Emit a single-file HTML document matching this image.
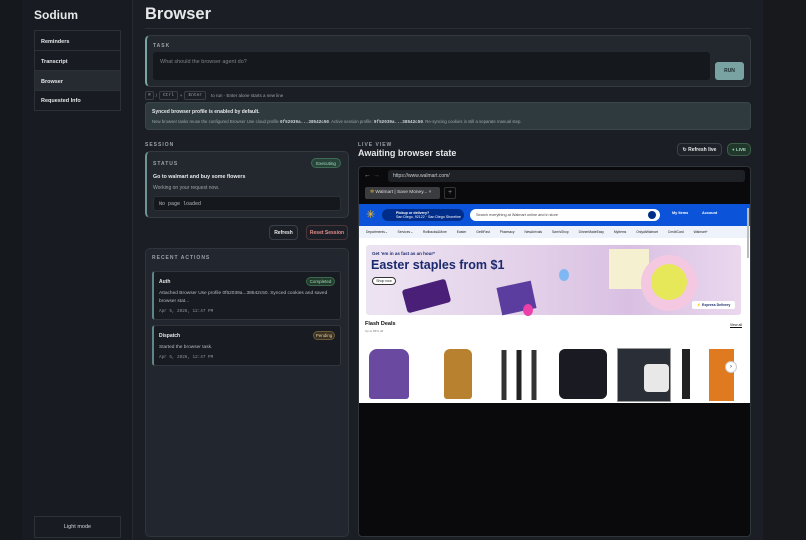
<!DOCTYPE html>
<html><head><meta charset="utf-8"><style>
*{box-sizing:border-box;margin:0;padding:0}
body{width:806px;height:540px;overflow:hidden;background:#15181c;font-family:"Liberation Sans",sans-serif;color:#e6e8ea;position:relative}
.abs{position:absolute}
.mono{font-family:"Liberation Mono",monospace}
.lbl{font-size:5px;letter-spacing:1px;color:#9aa2a8;font-weight:bold}
.btn{position:absolute;border:1px solid #3a4048;border-radius:4px;font-size:5px;font-weight:bold;display:flex;align-items:center;justify-content:center;background:#1c2026}
.pill{position:absolute;border-radius:5px;font-size:4.5px;display:flex;align-items:center;justify-content:center}
</style></head><body>
<!-- sidebar -->
<div class="abs" style="left:22px;top:0;width:111px;height:540px;background:#181b21;border-right:1px solid #262a30"></div>
<div class="abs" style="left:34px;top:8px;font-size:12px;font-weight:bold">Sodium</div>
<div class="abs" style="left:34px;top:30px;width:87px;height:81px;border:1px solid #2c3138">
<div style="height:20px;border-bottom:1px solid #2c3138;font-size:5.5px;font-weight:bold;padding:8px 0 0 6px">Reminders</div>
<div style="height:20px;border-bottom:1px solid #2c3138;font-size:5.5px;font-weight:bold;padding:8px 0 0 6px">Transcript</div>
<div style="height:20px;border-bottom:1px solid #2c3138;font-size:5.5px;font-weight:bold;padding:8px 0 0 6px;background:#262a31">Browser</div>
<div style="height:19px;font-size:5.5px;font-weight:bold;padding:7px 0 0 6px">Requested Info</div>
</div>
<div class="abs" style="left:34px;top:516px;width:87px;height:22px;border:1px solid #2c3138;font-size:5.5px;display:flex;align-items:center;justify-content:center;color:#d0d4d8">Light mode</div>
<!-- main -->
<div class="abs" style="left:133px;top:0;width:630px;height:540px;background:#1b1e24"></div>
<div class="abs" style="left:763px;top:0;width:43px;height:540px;background:#17191d"></div>
<div class="abs" style="left:145px;top:5px;font-size:16.5px;font-weight:bold">Browser</div>
<div class="abs" style="left:145px;top:28px;width:606px;height:1px;background:#2a2f35"></div>
<!-- task -->
<div class="abs" style="left:145px;top:35px;width:606px;height:52px;background:#23282f;border:1px solid #343a42;border-left:2px solid #7aa5a5;border-radius:5px"></div>
<div class="abs lbl" style="left:153px;top:43px">TASK</div>
<div class="abs" style="left:153px;top:52px;width:557px;height:28px;background:#15181c;border-radius:3px;font-size:5.5px;color:#7d848b;padding:7px 7px">What should the browser agent do?</div>
<div class="abs" style="left:715px;top:62px;width:29px;height:18px;background:#79a3a3;border-radius:3px;font-size:5px;font-weight:bold;color:#1b2a2a;display:flex;align-items:center;justify-content:center">RUN</div>
<div class="abs" style="left:145px;top:91px;font-size:4.5px;color:#9aa2a8;display:flex;align-items:center;gap:2px">
<span class="mono" style="border:1px solid #3a4048;padding:1px 2px;border-radius:2px">⌘</span>/<span class="mono" style="border:1px solid #3a4048;padding:1px 3px;border-radius:2px">Ctrl</span>+<span class="mono" style="border:1px solid #3a4048;padding:1px 3px;border-radius:2px">Enter</span><span style="margin-left:3px">to run · Enter alone starts a new line</span></div>
<!-- synced -->
<div class="abs" style="left:145px;top:102px;width:606px;height:28px;background:#2f3a3f;border:1px solid #3b464c;border-radius:4px"></div>
<div class="abs" style="left:152px;top:109px;font-size:5px;font-weight:bold">Synced browser profile is enabled by default.</div>
<div class="abs" style="left:152px;top:119px;font-size:4.3px;color:#9aa5aa;white-space:nowrap">New browser tasks reuse the configured Browser Use cloud profile <b class="mono" style="color:#d0d6d8">0f52039a...38542c50</b>. Active session profile: <b class="mono" style="color:#d0d6d8">0f52039a...38542c50</b>. Re-syncing cookies is still a separate manual step.</div>
<!-- session -->
<div class="abs lbl" style="left:145px;top:142px">SESSION</div>
<div class="abs" style="left:145px;top:151px;width:204px;height:67px;background:#23282f;border:1px solid #343a42;border-left:2px solid #6f9494;border-radius:5px"></div>
<div class="abs lbl" style="left:153px;top:161px">STATUS</div>
<div class="pill" style="left:311px;top:158px;width:30px;height:10px;background:#28443a;border:1px solid #3f6a55;color:#a8dcc0">Executing</div>
<div class="abs" style="left:153px;top:174px;font-size:5.3px;font-weight:bold">Go to walmart and buy some flowers</div>
<div class="abs" style="left:153px;top:185px;font-size:5px;color:#9aa2a8">Working on your request now.</div>
<div class="abs mono" style="left:153px;top:196px;width:188px;height:15px;background:#15181c;border:1px solid #2c3138;border-radius:3px;font-size:5px;color:#b8bec3;padding:4px 5px">No page loaded</div>
<div class="btn" style="left:269px;top:225px;width:29px;height:15px">Refresh</div>
<div class="btn" style="left:306px;top:225px;width:42px;height:15px;color:#e88c8c;border-color:#4a3538">Reset Session</div>
<!-- recent -->
<div class="abs" style="left:145px;top:248px;width:204px;height:289px;background:#22262e;border:1px solid #30353c;border-radius:5px"></div>
<div class="abs lbl" style="left:152px;top:255px">RECENT ACTIONS</div>
<div class="abs" style="left:152px;top:271px;width:189px;height:49px;background:#181b21;border:1px solid #30353c;border-left:2px solid #5f8585;border-radius:3px"></div>
<div class="abs" style="left:159px;top:279px;font-size:5px;font-weight:bold">Auth</div>
<div class="pill" style="left:306px;top:277px;width:29px;height:9px;background:#233a2e;border:1px solid #3b6a4c;color:#9fdab2">Completed</div>
<div class="abs" style="left:159px;top:290px;width:176px;font-size:4.8px;color:#b5bcc2;line-height:8px">Attached Browser Use profile 0f52039a...38542c50. Synced cookies and saved browser stat...</div>
<div class="abs mono" style="left:159px;top:309px;font-size:4.3px;color:#8e969c">Apr 5, 2026, 12:47 PM</div>
<div class="abs" style="left:152px;top:325px;width:189px;height:41px;background:#181b21;border:1px solid #30353c;border-left:2px solid #5f8585;border-radius:3px"></div>
<div class="abs" style="left:159px;top:333px;font-size:5px;font-weight:bold">Dispatch</div>
<div class="pill" style="left:313px;top:331px;width:22px;height:9px;background:#3a3224;border:1px solid #6a5a38;color:#e0c890">Pending</div>
<div class="abs" style="left:159px;top:345px;font-size:4.8px;color:#b5bcc2">Started the browser task.</div>
<div class="abs mono" style="left:159px;top:355px;font-size:4.3px;color:#8e969c">Apr 5, 2026, 12:47 PM</div>
<!-- live view -->
<div class="abs lbl" style="left:358px;top:142px">LIVE VIEW</div>
<div class="abs" style="left:358px;top:148px;font-size:9px;font-weight:bold">Awaiting browser state</div>
<div class="btn" style="left:677px;top:143px;width:45px;height:13px;background:#1f2329">↻ Refresh live</div>
<div class="pill" style="left:727px;top:143px;width:24px;height:13px;background:#22372c;border:1px solid #3b5f48;color:#a8dcc0;font-weight:bold"><span style="color:#6fd08f">●</span>&nbsp;LIVE</div>
<div class="abs" style="left:358px;top:166px;width:393px;height:371px;background:#0a0a0c;border:1px solid #30353c;border-radius:4px"></div>
<div class="abs" style="left:364px;top:172px;font-size:7px;color:#aaa">← <span style="color:#555">→</span></div>
<div class="abs" style="left:388px;top:170px;width:357px;height:12px;background:#1e2126;border-radius:3px;font-size:5px;color:#ccc;padding:3px 5px">https://www.walmart.com/</div>
<div class="abs" style="left:365px;top:187px;width:75px;height:12px;background:#3a3c40;border-radius:2px;font-size:4.8px;color:#ddd;padding:3px 5px"><span style="color:#e8b93a">✲</span> Walmart | Save Money... ×</div>
<div class="abs" style="left:444px;top:187px;width:12px;height:12px;border:1px solid #333;border-radius:2px;font-size:7px;color:#888;text-align:center;line-height:10px">+</div>
<!-- walmart page -->
<div class="abs" style="left:359px;top:204px;width:391px;height:199px;background:#fff;overflow:hidden">
<div class="abs" style="left:0;top:0;width:391px;height:22px;background:#0b53d8"></div>
<div class="abs" style="left:7px;top:4px;color:#ffc220;font-size:11px">✳</div>
<div class="abs" style="left:23px;top:5px;width:82px;height:12px;background:#002d8a;border-radius:6px;font-size:3.6px;color:#fff;padding:2px 0 0 14px;font-weight:bold">Pickup or delivery?<br><span style="font-weight:normal">San Diego, 92122 · San Diego Shoreline</span></div>
<div class="abs" style="left:111px;top:5px;width:190px;height:12px;background:#fff;border-radius:6px;font-size:3.8px;color:#444;padding:4px 6px">Search everything at Walmart online and in store</div>
<div class="abs" style="left:289px;top:7px;width:8px;height:8px;background:#002d8a;border-radius:50%"></div>
<div class="abs" style="left:313px;top:7px;font-size:3.8px;color:#fff;font-weight:bold">My Items</div>
<div class="abs" style="left:343px;top:7px;font-size:3.8px;color:#fff;font-weight:bold">Account</div>
<div class="abs" style="left:0;top:22px;width:391px;height:12px;background:#eef3fb"></div>
<div class="abs" style="left:7px;top:26px;font-size:3.3px;color:#222;white-space:nowrap;word-spacing:9px">Departments⌄ Services⌄ Rollbacks&amp;More Easter GetItFast Pharmacy NewArrivals Sam'sShop DinnerMadeEasy MyItems OnlyatWalmart CreditCard Walmart+</div>
<div class="abs" style="left:7px;top:41px;width:375px;height:70px;border-radius:3px;background:linear-gradient(90deg,#ede4f2 0%,#e2cfe8 45%,#d9c0e3 70%,#ead8ee 100%)"></div>
<div class="abs" style="left:13px;top:47px;font-size:4.5px;color:#1a2a6c;font-weight:bold">Get 'em in as fast as an hour*</div>
<div class="abs" style="left:12px;top:54px;font-size:12.5px;color:#1a2a6c;font-weight:bold">Easter staples from $1</div>
<div class="abs" style="left:13px;top:73px;width:24px;height:8px;border:1px solid #333;border-radius:4px;background:#fff;font-size:3.5px;text-align:center;line-height:6px;color:#222">Shop now</div>
<div class="abs" style="left:45px;top:80px;width:45px;height:24px;background:#4a1f78;border-radius:3px;transform:rotate(-15deg)"></div>
<div class="abs" style="left:140px;top:80px;width:35px;height:28px;background:#5a3d9e;transform:rotate(-12deg)"></div>
<div class="abs" style="left:250px;top:45px;width:40px;height:40px;background:#f5f0d0"></div>
<div class="abs" style="left:282px;top:51px;width:56px;height:56px;background:#f4c8e0;border-radius:50%"></div>
<div class="abs" style="left:292px;top:60px;width:36px;height:36px;background:#e6e85a;border-radius:50%"></div>
<div class="abs" style="left:200px;top:65px;width:10px;height:12px;background:#7fb7f2;border-radius:50%"></div>
<div class="abs" style="left:164px;top:100px;width:10px;height:12px;background:#ec3fa7;border-radius:50%"></div>
<div class="abs" style="left:333px;top:97px;width:43px;height:8px;background:#fff;border-radius:2px;font-size:3.5px;color:#1a2a6c;font-weight:bold;text-align:center;line-height:8px">⚡ Express Delivery</div>
<div class="abs" style="left:6px;top:117px;font-size:5.5px;font-weight:bold;color:#111">Flash Deals</div>
<div class="abs" style="left:6px;top:125px;font-size:3px;color:#777">Up to 65% off</div>
<div class="abs" style="left:371px;top:119px;font-size:3.5px;color:#111;text-decoration:underline">View all</div>
<div class="abs" style="left:10px;top:145px;width:40px;height:50px;background:#6a4aa0;border-radius:8px 8px 3px 3px"></div>
<div class="abs" style="left:85px;top:145px;width:28px;height:50px;background:#b7812f;border-radius:6px 6px 3px 3px"></div>
<div class="abs" style="left:137px;top:146px;width:50px;height:50px;background:linear-gradient(90deg,#fff 10%,#333 12%,#333 20%,#fff 22%,#fff 40%,#222 42%,#222 50%,#fff 52%,#fff 70%,#333 72%,#333 80%,#fff 82%)"></div>
<div class="abs" style="left:200px;top:145px;width:48px;height:50px;background:#1a1a22;border-radius:6px"></div>
<div class="abs" style="left:258px;top:144px;width:54px;height:54px;background:#2a2e36;border:1px solid #999"></div>
<div class="abs" style="left:285px;top:160px;width:25px;height:28px;background:#e8e8e8;border-radius:4px"></div>
<div class="abs" style="left:323px;top:145px;width:8px;height:50px;background:#222"></div>
<div class="abs" style="left:350px;top:145px;width:25px;height:52px;background:#e07a20"></div>
<div class="abs" style="left:366px;top:157px;width:12px;height:12px;background:#fff;border:1px solid #ccc;border-radius:50%;font-size:6px;text-align:center;line-height:10px;color:#333">›</div>
<div class="abs" style="left:388px;top:4px;width:2px;height:50px;background:#bbb"></div>
</div>
</body></html>
